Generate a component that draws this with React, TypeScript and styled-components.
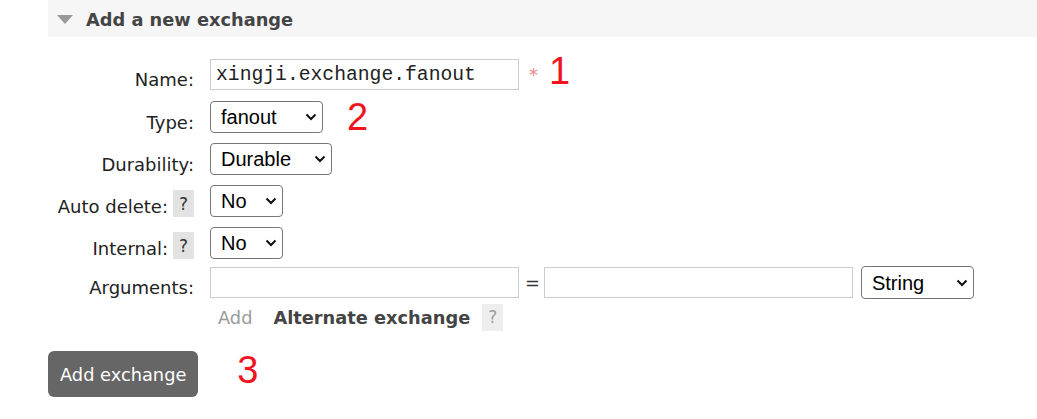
import React from "react";
import styled, { createGlobalStyle } from "styled-components";

const Global = createGlobalStyle`
  html, body { margin: 0; padding: 0; background: #fff; }
  body {
    font-family: "DejaVu Sans", Verdana, sans-serif;
    font-size: 17.8px;
    color: #222;
  }
`;

const Page = styled.div`
  padding-left: 48px;
`;

const Header = styled.div`
  height: 37px;
  background: #f6f6f6;
  display: flex;
  align-items: center;
  gap: 13px;
  padding-left: 9px;
  padding-top: 2px;
  box-sizing: border-box;
`;

const Title = styled.h2`
  margin: 0;
  font-size: 17.8px;
  font-weight: bold;
  color: #444;
`;

const Form = styled.div`
  margin-top: 16px;
  display: grid;
  grid-template-columns: 146px auto;
  grid-template-rows: 43px 42px 42px 42px 42px 37px 32px;
  column-gap: 16px;
  align-items: center;
`;

const LabelCell = styled.div`
  display: flex;
  justify-content: flex-end;
  align-items: center;
  gap: 5px;
  padding-top: 5px;
  white-space: nowrap;
  font-size: 18px;
`;

const LabelText = styled.span`
  padding-top: 5px;
`;

const Help = styled.span<{ $muted?: boolean }>`
  display: inline-flex;
  align-items: center;
  justify-content: center;
  width: 21px;
  height: 27px;
  background: ${(p) => (p.$muted ? "#eeeeee" : "#e2e2e2")};
  color: ${(p) => (p.$muted ? "#a0a0a0" : "#333")};
  font-size: 17px;
`;

const ValueCell = styled.div`
  display: flex;
  align-items: center;
`;

const TextInput = styled.input<{ $w: number }>`
  box-sizing: border-box;
  width: ${(p) => p.$w}px;
  height: 31px;
  border: 1px solid #cccccc;
  padding: 0 5px;
  font-family: "Liberation Mono", "Courier New", monospace;
  font-size: 19.7px;
  color: #222;
  outline: none;
  background: #fff;
`;

const SelectBox = styled.div<{ $w: number; $h?: number }>`
  position: relative;
  width: ${(p) => p.$w}px;
  height: ${(p) => p.$h ?? 32}px;
`;

const NativeSelect = styled.select`
  appearance: none;
  -webkit-appearance: none;
  box-sizing: border-box;
  width: 100%;
  height: 100%;
  border: 1px solid #767676;
  border-radius: 4px;
  background: #fff;
  color: #000;
  padding: 0 0 0 10px;
  font-family: "Liberation Sans", Arial, sans-serif;
  font-size: 20px;
  outline: none;
`;

const Chevron = styled.svg`
  position: absolute;
  right: 6px;
  top: 50%;
  margin-top: -4px;
  width: 12px;
  height: 8px;
  pointer-events: none;
`;

const Required = styled.span`
  margin-left: 10px;
  color: #f08080;
  font-size: 17.8px;
`;

const Marker = styled.span<{ $ml: number; $dy?: number }>`
  margin-left: ${(p) => p.$ml}px;
  font-family: "Liberation Sans", Arial, sans-serif;
  font-size: 38px;
  line-height: 1;
  color: #f0141e;
  position: relative;
  top: ${(p) => p.$dy ?? 0}px;
`;

const Eq = styled.span`
  margin: 0 4px 0 6px;
  color: #333;
`;

const Gap = styled.span<{ $w: number }>`
  display: inline-block;
  width: ${(p) => p.$w}px;
`;

const SubRow = styled.div`
  grid-column: 2;
  display: flex;
  align-items: center;
  padding-left: 8px;
`;

const AddLink = styled.span`
  color: #999;
  margin-right: 21px;
`;

const SubTitle = styled.span`
  font-weight: bold;
  color: #444;
  margin-right: 12px;
`;

const Footer = styled.div`
  margin-top: 18px;
  display: flex;
  align-items: center;
`;

const Button = styled.button`
  height: 46px;
  padding: 0 12px;
  border: none;
  border-radius: 6px;
  background: #666;
  color: #fff;
  font-family: "DejaVu Sans", Verdana, sans-serif;
  font-size: 17.8px;
`;

function Select({ w, h, value, options }: { w: number; h?: number; value: string; options: string[] }) {
  return (
    <SelectBox $w={w} $h={h}>
      <NativeSelect defaultValue={value}>
        {options.map((o) => (
          <option key={o}>{o}</option>
        ))}
      </NativeSelect>
      <Chevron viewBox="0 0 12 8">
        <polyline points="1.5,1.5 6,6 10.5,1.5" fill="none" stroke="#111" strokeWidth="2" />
      </Chevron>
    </SelectBox>
  );
}

export default function App() {
  return (
    <Page>
      <Global />
      <Header>
        <svg width="16" height="9" viewBox="0 0 16 9">
          <polygon points="0,0 16,0 8,9" fill="#999" />
        </svg>
        <Title>Add a new exchange</Title>
      </Header>
      <Form>
        <LabelCell>
          <LabelText>Name:</LabelText>
        </LabelCell>
        <ValueCell>
          <TextInput $w={309} defaultValue="xingji.exchange.fanout" />
          <Required>*</Required>
          <Marker $ml={11} $dy={-4}>1</Marker>
        </ValueCell>

        <LabelCell>
          <LabelText>Type:</LabelText>
        </LabelCell>
        <ValueCell>
          <Select w={113} value="fanout" options={["direct", "fanout", "headers", "topic"]} />
          <Marker $ml={24}>2</Marker>
        </ValueCell>

        <LabelCell>
          <LabelText>Durability:</LabelText>
        </LabelCell>
        <ValueCell>
          <Select w={122} value="Durable" options={["Durable", "Transient"]} />
        </ValueCell>

        <LabelCell>
          <LabelText>Auto delete:</LabelText>
          <Help>?</Help>
        </LabelCell>
        <ValueCell>
          <Select w={73} value="No" options={["No", "Yes"]} />
        </ValueCell>

        <LabelCell>
          <LabelText>Internal:</LabelText>
          <Help>?</Help>
        </LabelCell>
        <ValueCell>
          <Select w={73} value="No" options={["No", "Yes"]} />
        </ValueCell>

        <LabelCell>
          <LabelText>Arguments:</LabelText>
        </LabelCell>
        <ValueCell>
          <TextInput $w={309} />
          <Eq>=</Eq>
          <TextInput $w={309} />
          <Gap $w={8} />
          <Select w={113} h={33} value="String" options={["String", "Number", "Boolean", "List"]} />
        </ValueCell>

        <SubRow>
          <AddLink>Add</AddLink>
          <SubTitle>Alternate exchange</SubTitle>
          <Help $muted>?</Help>
        </SubRow>
      </Form>
      <Footer>
        <Button>Add exchange</Button>
        <Marker $ml={39} $dy={-4}>3</Marker>
      </Footer>
    </Page>
  );
}
